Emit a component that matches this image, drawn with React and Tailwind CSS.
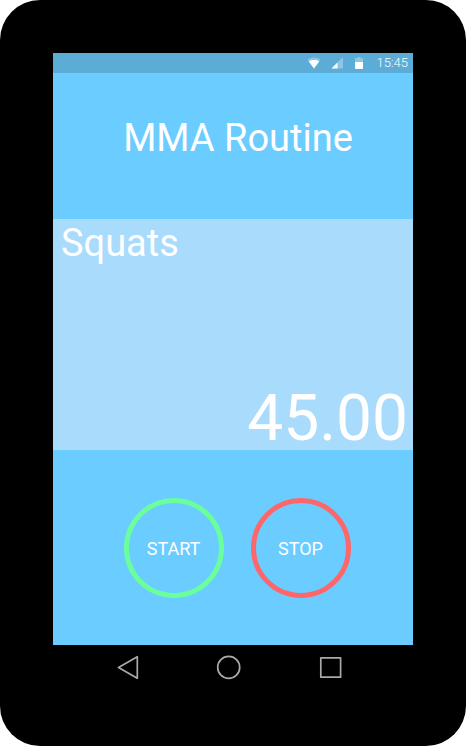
function StatusBar() {
  return (
    <div className="flex h-5 items-center justify-end bg-[#5cacd8] pr-[5px]">
      <svg className="mr-2.5 h-3 w-3.5" viewBox="0 0 14 12" aria-label="Wi-Fi">
        <path d="M0.5 2.6C4.2-0.3 9.8-0.3 13.5 2.6L7 11.5Z" fill="#fff" fillOpacity="0.3" />
        <path d="M1.8 4.4C4.8 2.6 9.2 2.6 12.2 4.4L7 11.5Z" fill="#fff" />
      </svg>
      <svg className="mr-3 h-3 w-3" viewBox="0 0 12 12" aria-label="Signal">
        <path d="M12 0V11.5H0.5Z" fill="#fff" fillOpacity="0.3" />
        <path d="M6.5 5.5V11.5H0.5Z" fill="#fff" />
      </svg>
      <svg className="mr-[13px] h-3 w-2" viewBox="0 0 8 12" aria-label="Battery">
        <path d="M2.5 0H5.5V1H8V5H0V1H2.5Z" fill="#fff" fillOpacity="0.3" />
        <path d="M0 5H8V11.3Q8 12 7.3 12H0.7Q0 12 0 11.3Z" fill="#fff" />
      </svg>
      <span className="text-[13px] leading-5 font-light text-white">15:45</span>
    </div>
  );
}

function RoundButton({ label, className }) {
  return (
    <button
      type="button"
      className={`h-[100px] w-[100px] rounded-full border-5 pt-0.5 text-lg text-white ${className}`}
    >
      {label}
    </button>
  );
}

function NavBar() {
  return (
    <nav className="flex justify-between pt-2.5 pr-[71px] pl-16">
      <button type="button" aria-label="Back">
        <svg className="h-6 w-6" viewBox="0 0 24 24" fill="none" stroke="#a9a9a9" strokeWidth="1.7" strokeLinejoin="round">
          <path d="M20.3 1.7V23.3L1.5 12.5Z" />
        </svg>
      </button>
      <button type="button" aria-label="Home">
        <svg className="h-6 w-6 overflow-visible" viewBox="0 0 24 24" fill="none" stroke="#a9a9a9" strokeWidth="1.7">
          <circle cx="10.7" cy="12.4" r="11" />
        </svg>
      </button>
      <button type="button" aria-label="Recent apps">
        <svg className="h-6 w-6" viewBox="0 0 24 24" fill="none" stroke="#a9a9a9" strokeWidth="1.7" strokeLinejoin="round">
          <path d="M2.8 2.8H22.6V22.2H2.8Z" />
        </svg>
      </button>
    </nav>
  );
}

export default function App() {
  return (
    <div className="bg-white pr-1.5 font-['Roboto',sans-serif]">
      <div className="rounded-[40px] bg-black px-[53px] pt-[53px] pb-[67px]">
        <main className="bg-[#6bccff] text-white">
          <StatusBar />
          <h1 className="pt-[41px] pb-[57px] pl-2.5 text-center text-[38px] leading-12">MMA Routine</h1>
          <section className="flex flex-col justify-between gap-[120px] bg-[#a9dbfd] pr-[5px] pl-2">
            <h2 className="text-[38px] leading-12">Squats</h2>
            <p className="text-right text-[64px] leading-[63px]">45.00</p>
          </section>
          <div className="flex justify-center gap-[27px] pt-12 pb-[47px] pl-2">
            <RoundButton label="START" className="border-[#6bff9c]" />
            <RoundButton label="STOP" className="border-[#ff6669]" />
          </div>
        </main>
        <NavBar />
      </div>
    </div>
  );
}
